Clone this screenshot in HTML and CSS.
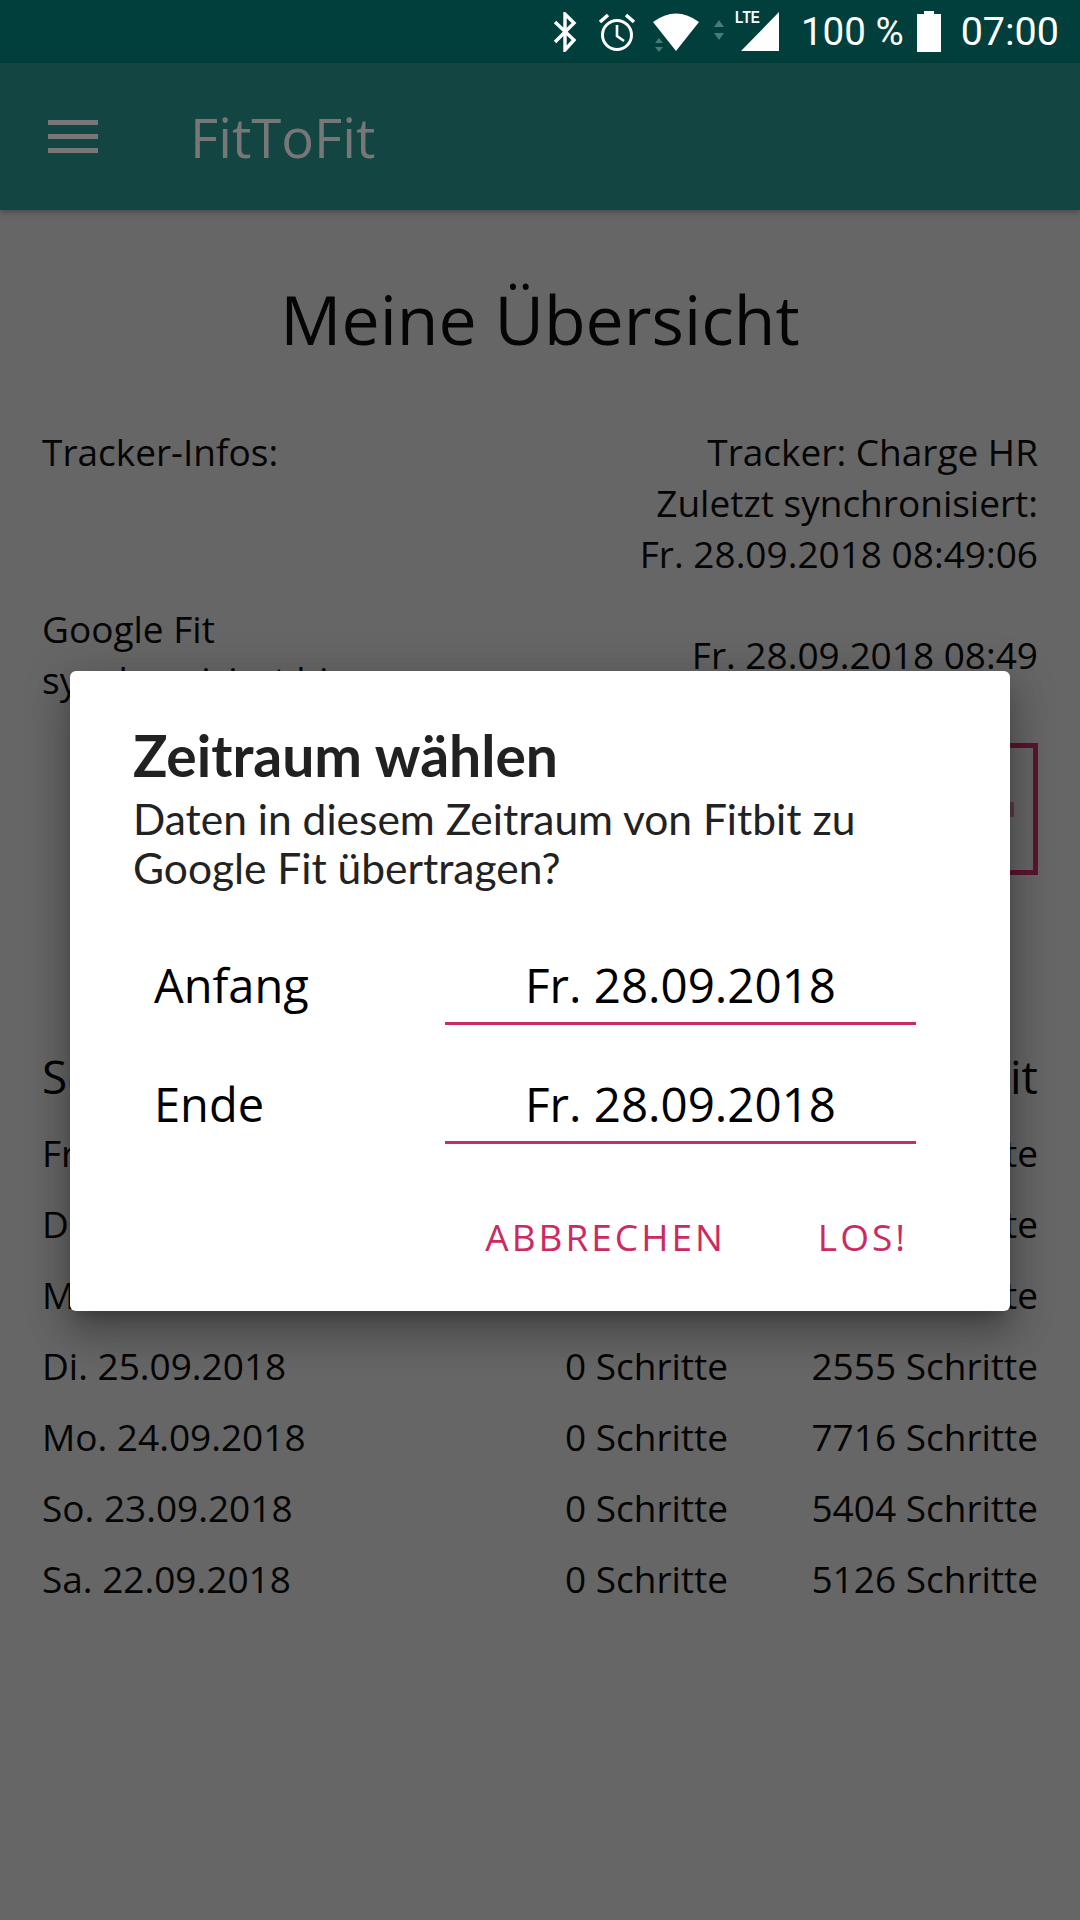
FILE: index.html
```html
<!DOCTYPE html>
<html lang="de">
<head>
  <meta charset="UTF-8" />
  <title>FitToFit</title>
  <link rel="stylesheet" href="styles.css">
</head>
<body>

  <!-- Status bar -->
  <div class="statusbar">
    <svg class="ic-bt" width="24" height="40" viewBox="0 0 24 40"><path d="M2 10 L21 28 L12 38 V2 L21 11 L2 30" fill="none" stroke="#fff" stroke-width="3.4"/></svg>
    <svg class="ic-alarm" width="38" height="40" viewBox="0 0 38 40"><circle cx="19" cy="23" r="14.5" fill="none" stroke="#fff" stroke-width="3"/><path d="M19 13 V24 L26 29" fill="none" stroke="#fff" stroke-width="2.6"/><path d="M2 10 L10 3 M36 10 L28 3" stroke="#fff" stroke-width="3.6"/></svg>
    <div class="wifi">
      <svg width="46" height="38" viewBox="0 0 46 38"><path d="M0 9 Q23 -8 46 9 L23 38 Z" fill="#fff"/></svg>
      <svg class="wifi-arrows" width="8" height="14" viewBox="0 0 8 14"><path d="M4 0 L8 5 H0 Z M4 14 L8 9 H0 Z" fill="#4b7a74"/></svg>
    </div>
    <svg class="ic-arrows" width="10" height="20" viewBox="0 0 10 20"><path d="M5 0 L10 7 H0 Z M5 20 L10 13 H0 Z" fill="#4b7a74"/></svg>
    <div class="signal">
      <span class="lte">LTE</span>
      <svg width="38" height="39" viewBox="0 0 38 39"><path d="M38 0 V39 H0 Z" fill="#fff"/></svg>
    </div>
    <span class="pct">100 %</span>
    <svg class="ic-batt" width="24" height="41" viewBox="0 0 24 41"><path d="M7 0 H17 V3 H24 V41 H0 V3 H7 Z" fill="#fff"/></svg>
    <span class="clock">07:00</span>
  </div>

  <!-- Toolbar -->
  <div class="toolbar">
    <div class="burger"><i></i><i></i><i></i></div>
    <span class="app-name">FitToFit</span>
  </div>

  <!-- Overview -->
  <main>
    <h1 class="title">Meine Übersicht</h1>

    <div class="info-row">
      <span>Tracker-Infos:</span>
      <span class="info-right">Tracker: Charge HR<br>Zuletzt synchronisiert:<br>Fr. 28.09.2018 08:49:06</span>
    </div>

    <div class="info-row info-sync">
      <span class="info-left">Google Fit<br>synchronisiert bis</span>
      <span class="info-right">Fr. 28.09.2018 08:49</span>
    </div>

    <div class="sync-btn"><i class="sync-mark"></i></div>

    <div class="steps-head">
      <span>Schritte</span>
      <span>Google Fit</span>
    </div>

    <div class="step-row"><span>Fr. 28.09.2018</span><span>0 Schritte</span><span>0 Schritte</span></div>
    <div class="step-row"><span>Do. 27.09.2018</span><span>0 Schritte</span><span>0 Schritte</span></div>
    <div class="step-row"><span>Mi. 26.09.2018</span><span>0 Schritte</span><span>0 Schritte</span></div>
    <div class="step-row"><span>Di. 25.09.2018</span><span>0 Schritte</span><span>2555 Schritte</span></div>
    <div class="step-row"><span>Mo. 24.09.2018</span><span>0 Schritte</span><span>7716 Schritte</span></div>
    <div class="step-row"><span>So. 23.09.2018</span><span>0 Schritte</span><span>5404 Schritte</span></div>
    <div class="step-row"><span>Sa. 22.09.2018</span><span>0 Schritte</span><span>5126 Schritte</span></div>
  </main>

  <!-- Dialog -->
  <div class="dialog">
    <h2>Zeitraum wählen</h2>
    <p>Daten in diesem Zeitraum von Fitbit zu Google Fit übertragen?</p>

    <div class="date-row">
      <span class="date-label">Anfang</span>
      <span class="date-value">Fr. 28.09.2018</span>
    </div>
    <div class="date-row">
      <span class="date-label">Ende</span>
      <span class="date-value">Fr. 28.09.2018</span>
    </div>

    <div class="dialog-buttons">
      <span>ABBRECHEN</span>
      <span>LOS!</span>
    </div>
  </div>

</body>
</html>
```

FILE: styles.css
```css
body {
  font-family: "Open Sans", "Noto Sans", sans-serif;
  margin: 0;
  width: 1080px;
  height: 1920px;
  overflow: hidden;
  background: #666;
  color: #050505;
  position: relative;
}

/* Status bar */
.statusbar {
  height: 63px;
  background: #003f3b;
  color: #fff;
  font-family: Roboto, sans-serif;
  font-size: 39.5px;
  display: flex;
  align-items: center;
  justify-content: flex-end;
  padding-right: 21px;
}

.ic-bt { margin-right: 21px; }
.ic-alarm { margin-right: 17px; }
.ic-arrows { margin-right: 17px; margin-top: -4px; }

.wifi {
  position: relative;
  width: 46px;
  height: 38px;
  margin-right: 15px;
}

.wifi-arrows {
  position: absolute;
  left: 2px;
  bottom: -1px;
}

.signal {
  position: relative;
  width: 38px;
  height: 39px;
  margin-right: 22px;
}

.lte {
  position: absolute;
  left: -9px;
  top: -3px;
  font-family: "Liberation Sans", sans-serif;
  font-size: 17px;
  font-weight: 700;
  line-height: 18px;
  transform: scaleX(0.8);
}

.pct { margin-right: 13px; font-size: 38.5px; }
.ic-batt { margin-right: 20px; }

/* Toolbar */
.toolbar {
  height: 147px;
  background: #134543;
  color: #777;
  display: flex;
  align-items: center;
  box-shadow: 0 2px 6px rgba(0,0,0,0.3);
}

.burger {
  width: 50px;
  margin-left: 48px;
  margin-right: 92px;
  display: flex;
  flex-direction: column;
  gap: 9px;
}

.burger i {
  height: 5px;
  background: #777;
}

.app-name { font-size: 54.5px; }

/* Overview */
main {
  padding: 0 42px;
  font-size: 37px;
  line-height: 51px;
}

.title {
  font-size: 68px;
  font-weight: 400;
  line-height: 88px;
  margin: 65px 0 0;
  text-align: center;
}

.info-row {
  display: flex;
  justify-content: space-between;
  margin-top: 63px;
}

.info-right { text-align: right; }

.info-sync {
  align-items: center;
  margin-top: 24px;
}

/* only the right end of this button shows beside the dialog */
.sync-btn {
  width: 480px;
  height: 122px;
  margin-top: 38px;
  margin-left: auto;
  border: 5px solid #5c1431;
  display: flex;
  align-items: center;
  justify-content: flex-end;
}

.sync-mark {
  width: 4px;
  height: 15px;
  margin-right: 19px;
  background: #5c3a47;
}

.steps-head {
  display: flex;
  justify-content: space-between;
  font-size: 46px;
  line-height: 60px;
  margin-top: 171px;
  margin-bottom: 11px;
}

.step-row {
  display: grid;
  grid-template-columns: 1fr 200px 310px;
  height: 71px;
  align-items: center;
}

.step-row span { white-space: nowrap; }
.step-row span + span { text-align: right; }

/* Dialog */
.dialog {
  position: absolute;
  left: 70px;
  top: 671px;
  width: 940px;
  height: 640px;
  box-sizing: border-box;
  padding: 54px 64px 0 63px;
  background: white;
  border-radius: 6px;
  box-shadow: 0 24px 38px 3px rgba(0,0,0,0.2), 0 9px 46px 8px rgba(0,0,0,0.12), 0 11px 15px -7px rgba(0,0,0,0.25);
}

.dialog h2 {
  font-family: Lato, sans-serif;
  font-size: 57px;
  font-weight: 700;
  line-height: 60px;
  margin: 0 0 9px;
  color: #212121;
}

.dialog p {
  font-family: Lato, sans-serif;
  font-size: 42.5px;
  line-height: 49px;
  margin: 0 0 14px;
  color: #222;
}

.date-row {
  display: flex;
  height: 119px;
  align-items: flex-end;
  margin-right: 30px;
  margin-left: 21px;
  color: black;
  font-size: 47.5px;
}

.date-label {
  width: 291px;
  font-size: 47px;
  line-height: 79px;
}

.date-value {
  flex: 1;
  text-align: center;
  line-height: 75px;
  border-bottom: 3px solid #cc2a62;
}

.dialog-buttons {
  display: flex;
  justify-content: flex-end;
  gap: 92px;
  margin-top: 67px;
  margin-right: 38px;
  font-size: 37px;
  letter-spacing: 3px;
  color: #cc2a62;
}
```
